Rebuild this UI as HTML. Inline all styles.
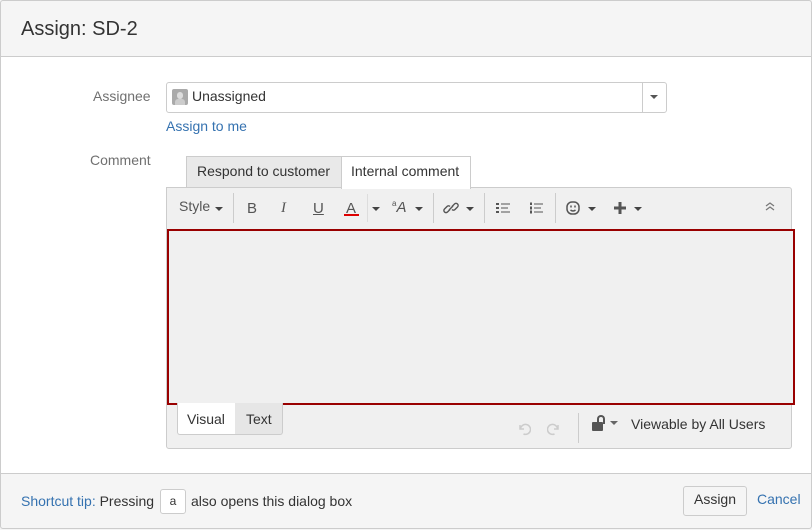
<!DOCTYPE html><html><head><style>
*{box-sizing:border-box;margin:0;padding:0}
body{width:812px;height:529px;font-family:"Liberation Sans",sans-serif;font-size:14px;color:#333;background:#fff;position:relative;overflow:hidden}
.a{position:absolute}
.w{position:absolute;left:1px;top:1px;width:812px;height:529px}
.ic{color:#555;font-size:15px}
.sep{width:1px;height:30px;background:#ccc;top:192px}
.car{position:absolute;width:0;height:0;border-left:4px solid transparent;border-right:4px solid transparent;border-top:4px solid #444}
</style></head><body>
<div class="w">
<div class="a" style="left:-1px;top:-1px;width:813px;height:57px;background:#f5f5f5;border-bottom:1px solid #ccc"></div>
<div class="a" style="left:20px;top:17px;font-size:20px;color:#333">Assign: SD-2</div>
<div class="a" style="left:92px;top:87px;color:#707070">Assignee</div>
<div class="a" style="left:165px;top:81px;width:501px;height:31px;border:1px solid #ccc;border-radius:3px;background:#fff"></div>
<div class="a" style="left:641px;top:82px;width:1px;height:29px;background:#ccc"></div>
<div class="car" style="left:649px;top:94px;border-top-color:#555"></div>
<div class="a" style="left:171px;top:88px;width:16px;height:16px;background:#aaa;border-radius:2px"><div class="a" style="left:5px;top:3px;width:6px;height:7px;border-radius:3px;background:#ddd"></div><div class="a" style="left:3px;top:10px;width:10px;height:6px;border-radius:3px 3px 0 0;background:#ccc"></div></div>
<div class="a" style="left:191px;top:87px">Unassigned</div>
<div class="a" style="left:165px;top:117px;color:#3572b0">Assign to me</div>
<div class="a" style="left:89px;top:151px;color:#707070">Comment</div>
<div class="a" style="left:185px;top:155px;width:156px;height:32px;background:#e9e9e9;border:1px solid #ccc;border-bottom:none"></div>
<div class="a" style="left:196px;top:162px">Respond to customer</div>
<div class="a" style="left:340px;top:155px;width:130px;height:33px;background:#fff;border:1px solid #ccc;border-bottom:none;z-index:2"></div>
<div class="a" style="left:350px;top:162px;z-index:3">Internal comment</div>
<div class="a" style="left:165px;top:186px;width:626px;height:262px;background:#f0f0f0;border:1px solid #ccc;border-radius:0 3px 3px 3px"></div>
<div class="a" style="left:178px;top:197px;color:#555">Style</div>
<div class="car" style="left:214px;top:206px"></div>
<div class="a sep" style="left:232px"></div>
<div class="a ic" style="left:246px;top:199px">B</div>
<div class="a ic" style="left:280px;top:199px;font-style:italic;font-family:'Liberation Serif'">I</div>
<div class="a ic" style="left:312px;top:199px;text-decoration:underline">U</div>
<div class="a ic" style="left:345px;top:199px">A</div>
<div class="a" style="left:343px;top:213px;width:15px;height:2px;background:#d00"></div>
<div class="a sep" style="left:366px;top:193px;height:28px;background:#ddd"></div>
<div class="car" style="left:371px;top:206px"></div>
<div class="a ic" style="left:391px;top:198px;font-style:italic"><sup style="font-size:8px;font-style:normal">a</sup>A</div>
<div class="car" style="left:414px;top:206px"></div>
<div class="a sep" style="left:432px"></div>
<svg class="a" style="left:442px;top:199px" width="16" height="16" viewBox="0 0 16 16" fill="none" stroke="#555" stroke-width="1.4"><path d="M7 9.5 L4.5 12 a2 2 0 0 1 -3 -3 L4 6.5 a2 2 0 0 1 3 0"/><path d="M9 6.5 L11.5 4 a2 2 0 0 1 3 3 L12 9.5 a2 2 0 0 1 -3 0"/><path d="M6 10 L10 6"/></svg>
<div class="car" style="left:465px;top:206px"></div>
<div class="a sep" style="left:483px"></div>
<svg class="a" style="left:495px;top:201px" width="14" height="12" viewBox="0 0 14 12" fill="#555"><rect x="0" y="1" width="3" height="2"/><rect x="0" y="5" width="3" height="2"/><rect x="0" y="9" width="3" height="2"/><rect x="5" y="1.5" width="9" height="1"/><rect x="5" y="5.5" width="7" height="1"/><rect x="5" y="9.5" width="9" height="1"/></svg>
<svg class="a" style="left:528px;top:201px" width="14" height="12" viewBox="0 0 14 12" fill="#555"><rect x="1" y="0.5" width="2" height="2.5"/><rect x="1" y="4.5" width="2" height="3"/><rect x="1" y="8.5" width="2" height="3"/><rect x="5" y="1.5" width="9" height="1"/><rect x="5" y="5.5" width="7" height="1"/><rect x="5" y="9.5" width="9" height="1"/></svg>
<div class="a sep" style="left:554px"></div>
<svg class="a" style="left:565px;top:200px" width="14" height="14" viewBox="0 0 14 14" fill="none" stroke="#555" stroke-width="1.5"><rect x="1" y="1" width="12" height="12" rx="5"/><path d="M5 4.5v2M9 4.5v2M4.5 9q2.5 2 5 0"/></svg>
<div class="car" style="left:587px;top:206px"></div>
<svg class="a" style="left:613px;top:201px" width="12" height="12" viewBox="0 0 12 12" fill="#555"><rect x="4.5" y="0" width="3" height="12"/><rect x="0" y="4.5" width="12" height="3"/></svg>
<div class="car" style="left:633px;top:206px"></div>
<svg class="a" style="left:763px;top:200px" width="12" height="10" viewBox="0 0 12 10" fill="none" stroke="#777" stroke-width="1.2"><path d="M2 5l4-3 4 3M2 9l4-3 4 3"/></svg>
<div class="a" style="left:166px;top:228px;width:628px;height:176px;border:2px solid #900;background:#f0f0f0"></div>
<div class="a" style="left:176px;top:402px;width:59px;height:32px;background:#fff;border:1px solid #ccc;border-top:none;border-radius:0 0 0 3px"></div>
<div class="a" style="left:186px;top:410px">Visual</div>
<div class="a" style="left:234px;top:402px;width:48px;height:32px;background:#e6e6e6;border:1px solid #ccc;border-top:none;border-left:none;border-radius:0 0 3px 0"></div>
<div class="a" style="left:245px;top:410px">Text</div>
<svg class="a" style="left:516px;top:421px" width="14" height="14" viewBox="0 0 14 14" fill="none" stroke="#ccc" stroke-width="1.5"><path d="M3 3v4h4"/><path d="M3.5 7a5 5 0 1 1 3 5"/></svg>
<svg class="a" style="left:546px;top:421px" width="14" height="14" viewBox="0 0 14 14" fill="none" stroke="#ccc" stroke-width="1.5"><path d="M11 3v4h-4"/><path d="M10.5 7a5 5 0 1 0 -3 5"/></svg>
<div class="a" style="left:577px;top:412px;width:1px;height:30px;background:#ccc"></div>
<div class="a" style="left:591px;top:421px;width:11px;height:9px;background:#555;border-radius:1px"></div>
<div class="a" style="left:596px;top:414px;width:8px;height:9px;border:2px solid #555;border-bottom:none;border-radius:4px 4px 0 0"></div>
<div class="car" style="left:609px;top:420px;border-top-color:#666"></div>
<div class="a" style="left:630px;top:415px">Viewable by All Users</div>
<div class="a" style="left:-1px;top:472px;width:813px;height:57px;background:#f5f5f5;border-top:1px solid #ccc"></div>
<div class="a" style="left:20px;top:492px"><span style="color:#3572b0">Shortcut tip:</span> Pressing</div>
<div class="a" style="left:159px;top:488px;width:26px;height:25px;border:1px solid #ccc;border-radius:3px;background:#fff;font-size:12px;text-align:center;line-height:22px">a</div>
<div class="a" style="left:190px;top:492px">also opens this dialog box</div>
<div class="a" style="left:682px;top:485px;width:64px;height:30px;border:1px solid #ccc;border-radius:3px;background:#f5f5f5;text-align:center;line-height:24px">Assign</div>
<div class="a" style="left:756px;top:490px;color:#3572b0">Cancel</div>
</div>
<div class="a" style="left:0;top:0;width:812px;height:529px;border:1px solid #ccc;border-radius:3px;pointer-events:none"></div>
</body></html>
